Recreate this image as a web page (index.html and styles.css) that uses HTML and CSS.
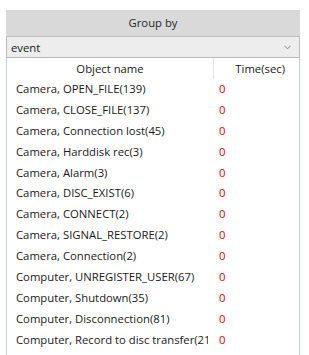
FILE: index.html
```
<!DOCTYPE html>
<html lang="en">
<head>
    <meta charset="UTF-8">
    <title>Group by</title>
    <link rel="stylesheet" href="styles.css">
</head>
<body>
<main class="panel">
    <div class="groupHeader">Group by</div>
    <div class="groupSelect">
        <span>event</span>
        <svg class="chevron" width="7" height="5" viewBox="0 0 7 5"><path d="M0.5 0.8 L3.5 3.8 L6.5 0.8" fill="none" stroke="#808080" stroke-width="1"/></svg>
    </div>
    <div class="eventTable">
        <div class="tableHead">
            <div class="colName">Object name</div>
            <div class="colTime">Time(sec)</div>
        </div>
        <div class="tableRow"><div class="cellName">Camera, OPEN_FILE(139)</div><div class="cellTime">0</div></div>
        <div class="tableRow"><div class="cellName">Camera, CLOSE_FILE(137)</div><div class="cellTime">0</div></div>
        <div class="tableRow"><div class="cellName">Camera, Connection lost(45)</div><div class="cellTime">0</div></div>
        <div class="tableRow"><div class="cellName">Camera, Harddisk rec(3)</div><div class="cellTime">0</div></div>
        <div class="tableRow"><div class="cellName">Camera, Alarm(3)</div><div class="cellTime">0</div></div>
        <div class="tableRow"><div class="cellName">Camera, DISC_EXIST(6)</div><div class="cellTime">0</div></div>
        <div class="tableRow"><div class="cellName">Camera, CONNECT(2)</div><div class="cellTime">0</div></div>
        <div class="tableRow"><div class="cellName">Camera, SIGNAL_RESTORE(2)</div><div class="cellTime">0</div></div>
        <div class="tableRow"><div class="cellName">Camera, Connection(2)</div><div class="cellTime">0</div></div>
        <div class="tableRow"><div class="cellName">Computer, UNREGISTER_USER(67)</div><div class="cellTime">0</div></div>
        <div class="tableRow"><div class="cellName">Computer, Shutdown(35)</div><div class="cellTime">0</div></div>
        <div class="tableRow"><div class="cellName">Computer, Disconnection(81)</div><div class="cellTime">0</div></div>
        <div class="tableRow"><div class="cellName">Computer, Record to disc transfer(21)</div><div class="cellTime">0</div></div>
    </div>
</main>
</body>
</html>
```

FILE: styles.css
```
* {
    box-sizing: border-box;
    margin: 0;
    padding: 0;
}

body {
    background-color: #ffffff;
    font-family: 'Open Sans', sans-serif;
    font-size: 11.3px;
    color: #1a1a1a;
    height: 355px;
    overflow: hidden;
}

.panel {
    width: 294px;
    margin: 10px 0 0 6px;
}

.groupHeader {
    height: 26px;
    background-color: #d9d9d9;
    text-align: center;
    line-height: 26px;
    color: #262626;
}

.groupSelect {
    height: 22px;
    display: flex;
    align-items: center;
    justify-content: space-between;
    padding: 0 8px 0 4px;
    background-color: #ededed;
    border: 1px solid #bdbdbd;
}

.chevron {
    margin-top: 1px;
}

.eventTable {
    border-left: 1px solid #c5d4de;
    border-right: 1px solid #c5d4de;
    height: 297px;
    overflow: hidden;
}

.tableHead {
    display: flex;
    height: 21px;
    line-height: 21px;
}

.colName {
    width: 207px;
    text-align: center;
    border-right: 1px solid #e3e3e3;
}

.colTime {
    flex: 1;
    text-align: right;
    padding-right: 14px;
}

.tableRow {
    display: flex;
    height: 20.9px;
    line-height: 20.9px;
}

.cellName {
    width: 201px;
    flex-shrink: 0;
    padding-left: 9px;
    white-space: nowrap;
    overflow: hidden;
}

.cellTime {
    flex: 1;
    padding-left: 11px;
    color: #e00000;
}
```
